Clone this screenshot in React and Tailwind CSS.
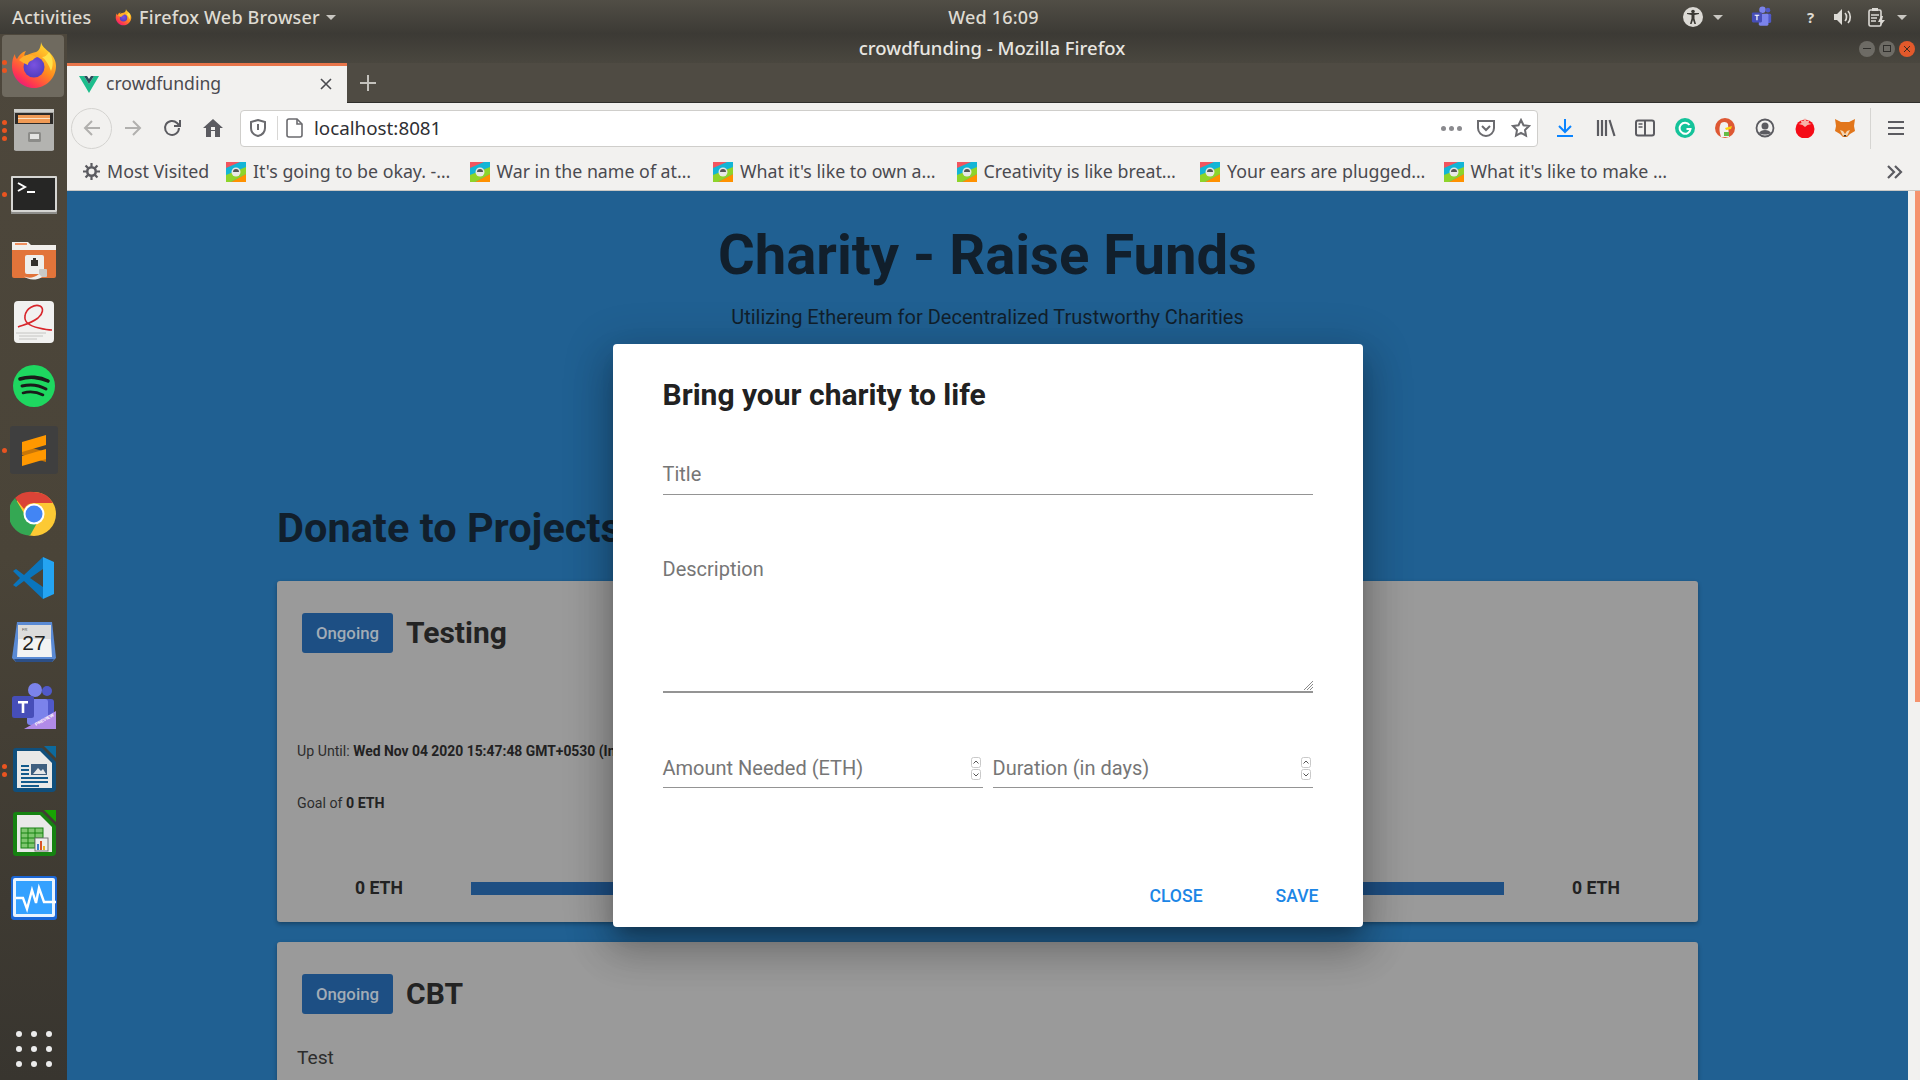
// App.jsx - Firefox on Ubuntu showing the crowdfunding page with the new charity dialog

const chromeFont = "font-['Noto_Sans','Open_Sans',sans-serif]";

// Dock and top bar icons
function FirefoxIcon({ size = 48 }) {
  return (
    <svg width={size} height={size} viewBox="0 0 48 48">
      <defs>
        <linearGradient id="ffBody" x1="0.8" y1="0.1" x2="0.2" y2="1">
          <stop offset="0" stopColor="#ffd52e" />
          <stop offset="0.45" stopColor="#ff8a1e" />
          <stop offset="0.8" stopColor="#ff3750" />
          <stop offset="1" stopColor="#e31587" />
        </linearGradient>
        <radialGradient id="ffGlobe" cx="0.5" cy="0.4" r="0.7">
          <stop offset="0" stopColor="#7a52e0" />
          <stop offset="1" stopColor="#4b3ab8" />
        </radialGradient>
      </defs>
      <path d="M31 0c1 5 5 7 8 10 5 5 7 9 7 14 0 12-10 22-22 22S2 36 2 24c0-5 1-9 3-12 0 3 1 4 2 5 2-4 5-7 9-8-2 3-2 5-1 6 3-3 7-4 11-5 3-1 5-5 5-10z" fill="url(#ffBody)" />
      <circle cx="24" cy="25" r="10.5" fill="url(#ffGlobe)" />
      <path d="M9 18c4-5 9-6 13-5 3 1 5 2 7 2-4 0-5 2-6 3-4 1-5 3-5 5-3-1-6-3-9-5z" fill="#ffb02a" />
      <path d="M39 10c4 6 5 12 2 19-2-6-5-11-9-14 3 0 5-2 7-5z" fill="#ffe14a" />
    </svg>
  );
}

function FilesIcon() {
  return (
    <svg width="48" height="48" viewBox="0 0 48 48">
      <rect x="4" y="3" width="40" height="42" rx="2" fill="#a9a9a6" />
      <rect x="4" y="3" width="40" height="3" fill="#cfcfcc" />
      <rect x="5" y="7" width="38" height="11" fill="#2d2a28" />
      <rect x="8" y="9" width="32" height="8" fill="#f09a55" />
      <rect x="8" y="12" width="32" height="1" fill="#fbe0c2" />
      <rect x="4" y="18" width="40" height="26" fill="#b3b3b0" />
      <rect x="18" y="26" width="13" height="10" rx="1.5" fill="#8c8c89" />
      <rect x="20" y="28" width="9" height="5" fill="#e4e4e2" />
    </svg>
  );
}

function TerminalIcon() {
  return (
    <svg width="48" height="48" viewBox="0 0 48 48">
      <rect x="1" y="6" width="46" height="36" rx="1" fill="#d6d6d3" />
      <rect x="3" y="8" width="42" height="32" fill="#262625" />
      <path d="M8 13l7 4-7 4" fill="none" stroke="#fff" strokeWidth="2" />
      <rect x="17" y="21" width="8" height="2" fill="#fff" />
      <rect x="1" y="42" width="46" height="2" fill="#8f8f8c" />
    </svg>
  );
}

function NetFolderIcon() {
  return (
    <svg width="48" height="48" viewBox="0 0 48 48">
      <path d="M2 8h16l3 3h25v8H2z" fill="#f2efec" />
      <rect x="5" y="9" width="12" height="2" fill="#ef8e5d" />
      <path d="M2 16h44v26a2 2 0 0 1-2 2H4a2 2 0 0 1-2-2z" fill="#e2743a" />
      <rect x="15" y="21" width="19" height="19" rx="2" fill="#eeeeec" />
      <path d="M21 32v-6h2v-2h3v2h2v6z" fill="#33302c" />
      <rect x="29" y="35" width="8" height="8" rx="1" fill="#c9c9c6" />
      <path d="M29 40c-6 5-12 4-15 2 3 4 12 5 18 1z" fill="#eeeeec" />
    </svg>
  );
}

function EvinceIcon() {
  return (
    <svg width="48" height="48" viewBox="0 0 48 48">
      <rect x="4" y="3" width="40" height="42" rx="4" fill="#f1f1f0" />
      <path d="M8 29c5-2 12-3 20-9 5-4 6-10 2-12-5-2-14 2-15 10-1 6 5 10 14 12 4 1 9 2 13 2" fill="none" stroke="#d8262c" strokeWidth="1.6" />
      <path d="M6 35h30M9 38h24M9 41h18" stroke="#c4c4c2" strokeWidth="1" />
    </svg>
  );
}

function SpotifyIcon() {
  return (
    <svg width="48" height="48" viewBox="0 0 48 48">
      <circle cx="24" cy="24" r="21" fill="#1ed760" />
      <path d="M10 17c9-3 20-2 28 2" fill="none" stroke="#1a1a1a" strokeWidth="3.6" strokeLinecap="round" />
      <path d="M12 24c8-2 17-1 24 3" fill="none" stroke="#1a1a1a" strokeWidth="3" strokeLinecap="round" />
      <path d="M13 31c7-2 14-1 20 2" fill="none" stroke="#1a1a1a" strokeWidth="2.6" strokeLinecap="round" />
    </svg>
  );
}

function SublimeIcon() {
  return (
    <svg width="48" height="48" viewBox="0 0 48 48">
      <rect x="0" y="0" width="48" height="48" rx="3" fill="#3f3f3f" />
      <path d="M12 19l24 7v10L12 29z" fill="#c87607" />
      <path d="M12 16l24-7v10L12 26z" fill="#ff9800" />
      <path d="M12 30l24-7v10L12 40z" fill="#ff9800" />
    </svg>
  );
}

function ChromeIcon() {
  return (
    <svg width="48" height="48" viewBox="0 0 48 48">
      <circle cx="24" cy="24" r="22" fill="#fcc934" />
      <path d="M24 2a22 22 0 0 1 19 11H24a11 11 0 0 0-10 6L5 8a22 22 0 0 1 19-6z" fill="#db4437" />
      <path d="M5 8l10 17a10 10 0 0 0 12 8l-7 12.600A22 22 0 0 1 5 8z" fill="#34a853" />
      <circle cx="24" cy="24" r="10.500" fill="#fff" />
      <circle cx="24" cy="24" r="8.500" fill="#4285f4" />
    </svg>
  );
}

function VSCodeIcon() {
  return (
    <svg width="48" height="48" viewBox="0 0 48 48">
      <path d="M33 3l11 5v32l-11 5z" fill="#24a4f2" />
      <path d="M33 3L14 21 6 15l-3 2 7 7-7 7 3 2 8-6 19 18V33L20 24 33 15z" fill="#0a75bd" />
    </svg>
  );
}

function CalendarIcon() {
  return (
    <svg width="48" height="48" viewBox="0 0 48 48">
      <path d="M7 4h35l4 36-4 4H6l-4-4z" fill="#5a8ad4" />
      <path d="M9 7h31l2 32H7z" fill="#f3f3f3" />
      <rect x="8" y="7" width="33" height="14" fill="#dcdcdc" />
      <text x="12" y="13" fontSize="4" fontFamily="Liberation Sans, sans-serif" fill="#555">FR</text>
      <text x="24" y="32" textAnchor="middle" fontSize="21" fontFamily="Liberation Sans, sans-serif" fill="#222">27</text>
      <path d="M6 44h36l2-3H4z" fill="#2d4f86" />
    </svg>
  );
}

function TeamsIcon({ size = 48, preview = true }) {
  return (
    <svg width={size} height={size} viewBox="0 0 48 48">
      <circle cx="25" cy="8" r="7" fill="#7b83eb" />
      <circle cx="37" cy="9" r="5" fill="#5059c9" />
      <rect x="31" y="17" width="13" height="20" rx="3" fill="#5059c9" />
      <rect x="17" y="17" width="21" height="26" rx="3" fill="#7b83eb" />
      <rect x="2" y="14" width="22" height="22" rx="2.500" fill="#464eb8" />
      <path d="M8 19h10v2.500h-3.700V31h-2.600v-9.500H8z" fill="#fff" />
      {preview && <path d="M14 47l32-18v18z" fill="#b18be8" />}
      {preview && <text x="26" y="44" fontSize="4.500" fontWeight="700" fontFamily="Liberation Sans, sans-serif" fill="#fff" transform="rotate(-29 26 44)">PREVIEW</text>}
    </svg>
  );
}

function WriterIcon() {
  return (
    <svg width="48" height="48" viewBox="0 0 48 48">
      <path d="M6 2h26l14 14v26a4 4 0 0 1-4 4H6a3 3 0 0 1-3-3V5a3 3 0 0 1 3-3z" fill="#104f7c" />
      <path d="M34 0h12v12z" fill="#0c6a9e" />
      <path d="M7 5h23l12 12v25H7z" fill="#e9e9e8" />
      <path d="M11 19h8v2h-8zM11 23h8v2h-8zM11 27h8v2h-8zM11 31h27v2H11zM11 35h27v2H11zM11 39h18v2H11z" fill="#145b8c" />
      <rect x="21" y="18" width="16" height="11" fill="#3f5f7f" />
      <path d="M23 28l5-6 3 3 2-2 3 5z" fill="#e8e8e8" />
    </svg>
  );
}

function CalcIcon() {
  return (
    <svg width="48" height="48" viewBox="0 0 48 48">
      <path d="M6 2h26l14 14v26a4 4 0 0 1-4 4H6a3 3 0 0 1-3-3V5a3 3 0 0 1 3-3z" fill="#168211" />
      <path d="M34 0h12v12z" fill="#18a303" />
      <path d="M7 5h23l12 12v25H7z" fill="#e9e9e8" />
      <rect x="11" y="18" width="22" height="20" fill="#7fc66f" stroke="#168211" />
      <path d="M11 23h22M11 28h22M11 33h22M18 18v20M25 18v20" stroke="#168211" strokeWidth="1" />
      <rect x="25" y="28" width="13" height="13" fill="#eee" stroke="#777" />
      <path d="M27 34h2v6h-2z" fill="#3f80c8" />
      <path d="M30 31h2v9h-2z" fill="#d9532b" />
      <path d="M33 36h2v4h-2z" fill="#e9b42b" />
    </svg>
  );
}

function MonitorIcon() {
  return (
    <svg width="48" height="48" viewBox="0 0 48 48">
      <rect x="1" y="2" width="46" height="44" rx="3" fill="#1b66d6" />
      <rect x="3" y="4" width="42" height="39" rx="2" fill="#eaf4ff" />
      <rect x="6" y="7" width="36" height="33" fill="#34a1ff" />
      <path d="M6 24h7l4 11 5-19 4 13 3-15 5 14h12" fill="none" stroke="#fff" strokeWidth="2.400" />
    </svg>
  );
}

function AppGrid() {
  return (
    <div className="grid grid-cols-3 gap-[9px]">
      {Array.from({ length: 9 }).map((_, i) => (
        <span key={i} className="w-[6px] h-[6px] rounded-full bg-[#ececec]" />
      ))}
    </div>
  );
}

const dockApps = [
  { icon: <FirefoxIcon />, dots: 2, active: true },
  { icon: <FilesIcon />, dots: 3 },
  { icon: <TerminalIcon />, dots: 1 },
  { icon: <NetFolderIcon />, dots: 0 },
  { icon: <EvinceIcon />, dots: 0 },
  { icon: <SpotifyIcon />, dots: 0 },
  { icon: <SublimeIcon />, dots: 1 },
  { icon: <ChromeIcon />, dots: 0 },
  { icon: <VSCodeIcon />, dots: 0 },
  { icon: <CalendarIcon />, dots: 0 },
  { icon: <TeamsIcon />, dots: 0 },
  { icon: <WriterIcon />, dots: 2 },
  { icon: <CalcIcon />, dots: 0 },
  { icon: <MonitorIcon />, dots: 0 },
];

function Dock() {
  return (
    <div className="w-[67px] shrink-0 flex flex-col bg-gradient-to-b from-[#4d473c] via-[#4a4438] to-[#38352f]">
      {dockApps.map((app, i) => (
        <div key={i} className="relative h-[64px] flex items-center justify-center">
          {app.active && <div className="absolute left-[2px] right-[3px] top-[1px] bottom-[1px] rounded-[4px] bg-[#6f6a5f]" />}
          <div className="relative">{app.icon}</div>
          {app.dots > 0 && (
            <div className="absolute left-[2px] top-0 bottom-0 flex flex-col justify-center gap-[3px]">
              {Array.from({ length: app.dots }).map((_, d) => (
                <span key={d} className="w-[5px] h-[5px] rounded-full bg-[#e95420]" />
              ))}
            </div>
          )}
        </div>
      ))}
      <div className="mt-auto h-[64px] pt-[2px] flex items-center justify-center">
        <AppGrid />
      </div>
    </div>
  );
}

function Caret() {
  return <span className="block w-0 h-0 border-x-[5px] border-x-transparent border-t-[5px] border-t-[#c9c7c2]" />;
}

// Ubuntu top panel
function TopBar() {
  return (
    <div className={`h-[34px] shrink-0 flex items-center text-[#dfdbd2] text-[18px] tracking-[0.2px] font-medium bg-gradient-to-b from-[#514e46] to-[#3c3a35] ${chromeFont}`}>
      <span className="ml-[12px] w-[103px]">Activities</span>
      <FirefoxIcon size={17} />
      <span className="ml-[7px]">Firefox Web Browser</span>
      <span className="ml-[6px]"><Caret /></span>
      <div className="flex-1 flex justify-center pr-[28px]">
        <span>Wed 16:09</span>
      </div>
      <div className="flex items-center w-[241px]">
        <svg width="20" height="20" viewBox="0 0 20 20" className="ml-[4px]">
          <circle cx="10" cy="10" r="10" fill="#dcdad5" />
          <circle cx="10" cy="4.500" r="1.800" fill="#3c3a35" />
          <path d="M4 7l4.500 1v3.500L7 17h1.600l1.400-4 1.400 4H13l-1.500-5.500V8L16 7V6H4z" fill="#3c3a35" />
        </svg>
        <span className="ml-[10px]"><Caret /></span>
        <span className="ml-[28px]"><TeamsIcon size={22} preview={false} /></span>
        <span className="ml-[34px] w-[14px] text-[15px] font-bold">?</span>
        <svg width="20" height="18" viewBox="0 0 20 18" className="ml-[12px]">
          <path d="M1 6h3l5-5v16l-5-5H1z" fill="#dcdad5" />
          <path d="M12 5c2 2 2 6 0 8M15 3c3 3 3 9 0 12" fill="none" stroke="#dcdad5" strokeWidth="1.700" />
        </svg>
        <svg width="18" height="20" viewBox="0 0 18 20" className="ml-[15px]">
          <rect x="1" y="3" width="12" height="16" rx="1.500" fill="none" stroke="#dcdad5" strokeWidth="1.600" />
          <rect x="4" y="1" width="6" height="3" fill="#dcdad5" />
          <path d="M3 8h8M3 11h6M3 14h5" stroke="#dcdad5" strokeWidth="1.500" />
          <path d="M13 9l-3 6h3l-1 4 5-6h-3l1-4z" fill="#dcdad5" />
        </svg>
        <span className="ml-[11px]"><Caret /></span>
      </div>
    </div>
  );
}

function WindowButtons() {
  return (
    <div className="flex items-center gap-[4px] pr-[5px]">
      <span className="w-[16px] h-[16px] rounded-full bg-[#6d6b65] flex items-center justify-center">
        <span className="w-[8px] h-[1px] bg-[#2f2e2b]" />
      </span>
      <span className="w-[16px] h-[16px] rounded-full bg-[#6d6b65] flex items-center justify-center">
        <span className="w-[8px] h-[7px] border border-[#2f2e2b]" />
      </span>
      <span className="w-[16px] h-[16px] rounded-full bg-[#e2592b] flex items-center justify-center">
        <svg width="8" height="8" viewBox="0 0 8 8"><path d="M1 1l6 6M7 1L1 7" stroke="#3c2a20" strokeWidth="1" /></svg>
      </span>
    </div>
  );
}

function TitleBar() {
  return (
    <div className={`h-[29px] shrink-0 flex items-center bg-gradient-to-b from-[#3c3a35] to-[#4a473f] ${chromeFont}`}>
      <div className="flex-1 pl-[58px] pb-[2px] text-center text-[18.5px] font-medium text-[#e8e6e1]">crowdfunding - Mozilla Firefox</div>
      <WindowButtons />
    </div>
  );
}

function TabStrip() {
  return (
    <div className={`h-[40px] shrink-0 flex bg-[#4f4b43] border-b border-[#2f2e2b] ${chromeFont}`}>
      <div className="w-[280px] h-[40px] flex items-center bg-[#f2f1ef] border-t-[3px] border-[#e8754a] pl-[12px] pr-[14px] pb-[2px]">
        <svg width="20" height="18" viewBox="0 0 20 18">
          <path d="M0 1h5l5 8 5-8h5L10 18z" fill="#1dbd8c" />
          <path d="M5 1h3l2 3 2-3h3l-5 8z" fill="#2d4a5a" />
        </svg>
        <span className="ml-[7px] flex-1 text-[17.6px] text-[#4a4a4f]">crowdfunding</span>
        <svg width="14" height="14" viewBox="0 0 14 14"><path d="M2 2l10 10M12 2L2 12" stroke="#4a4a4f" strokeWidth="1.600" /></svg>
      </div>
      <div className="w-[42px] flex items-center justify-center">
        <svg width="18" height="18" viewBox="0 0 18 18"><path d="M9 1v16M1 9h16" stroke="#c4c2bd" strokeWidth="2" /></svg>
      </div>
    </div>
  );
}

// Toolbar icons, all 20x20 in #5b5b60
function ToolIcon({ children, w = 20, className = "" }) {
  return (
    <svg width={w} height="20" viewBox={`0 0 ${w} 20`} className={className} fill="none" stroke="#5b5b60" strokeWidth="2">
      {children}
    </svg>
  );
}

function Toolbar() {
  return (
    <div className={`h-[50px] shrink-0 flex items-center bg-[#f2f1ef] ${chromeFont}`}>
      <div className="ml-[4px] w-[41px] h-[41px] rounded-full border border-[#d4d3d0] flex items-center justify-center">
        <ToolIcon><path d="M18 10H3M10 3l-7 7 7 7" stroke="#b1b0ae" /></ToolIcon>
      </div>
      <ToolIcon className="ml-[11px]"><path d="M2 10h15M10 3l7 7-7 7" stroke="#b1b0ae" /></ToolIcon>
      <ToolIcon className="ml-[20px]"><path d="M16 10a7 7 0 1 1-2-5l3 3M17 2v6h-6" /></ToolIcon>
      <svg width="20" height="20" viewBox="0 0 20 20" className="ml-[20px]">
        <path d="M10 1L0 10h3v9h5v-6h4v6h5v-9h3z" fill="#5b5b60" />
        <rect x="8" y="9" width="4" height="3" fill="#f2f1ef" />
      </svg>
      <div className="ml-[17px] w-[1298px] h-[37px] flex items-center bg-white border border-[#cfcecb] rounded-[4px]">
        <svg width="16" height="18" viewBox="0 0 16 18" className="ml-[9px]">
          <path d="M8 1l7 2v6c0 4-3 7-7 8-4-1-7-4-7-8V3z" fill="none" stroke="#6b6b6f" strokeWidth="2" />
          <rect x="7" y="5" width="2" height="6" fill="#6b6b6f" />
        </svg>
        <span className="ml-[11px] w-px h-[24px] bg-[#d8d7d5]" />
        <svg width="18" height="20" viewBox="0 0 18 20" className="ml-[8px]">
          <path d="M3 1h8l5 5v11a2 2 0 0 1-2 2H3a2 2 0 0 1-2-2V3a2 2 0 0 1 2-2z" fill="none" stroke="#6b6b6f" strokeWidth="1.600" />
          <path d="M11 1v5h5" fill="none" stroke="#6b6b6f" strokeWidth="1.600" />
        </svg>
        <span className="ml-[10px] flex-1 text-[18.8px] text-[#2f2f33]">localhost:8081</span>
        <span className="flex gap-[3px]">
          <span className="w-[5px] h-[5px] rounded-full bg-[#8a8a8e]" />
          <span className="w-[5px] h-[5px] rounded-full bg-[#8a8a8e]" />
          <span className="w-[5px] h-[5px] rounded-full bg-[#8a8a8e]" />
        </span>
        <ToolIcon className="ml-[14px]"><path d="M2 3h16v7a8 8 0 0 1-16 0z" stroke="#6b6b6f" /><path d="M6 8l4 4 4-4" stroke="#6b6b6f" /></ToolIcon>
        <ToolIcon className="ml-[15px] mr-[6px]"><path d="M10 2l2.500 5.300 5.500.700-4 4 1 5.700-5-2.800-5 2.800 1-5.700-4-4 5.500-.700z" stroke="#6b6b6f" /></ToolIcon>
      </div>
      <ToolIcon className="ml-[17px]"><path d="M10 1v12M4 8l6 6 6-6M2 18h16" stroke="#0a84ff" /></ToolIcon>
      <svg width="20" height="20" viewBox="0 0 20 20" className="ml-[21px]">
        <path d="M2 2v16M6 2v16M10 2v16M13.500 2l5 16" stroke="#5b5b60" strokeWidth="2.200" fill="none" />
      </svg>
      <svg width="20" height="20" viewBox="0 0 20 20" className="ml-[19px]">
        <rect x="1" y="2.500" width="18" height="15" rx="2" fill="none" stroke="#5b5b60" strokeWidth="2" />
        <path d="M10 2.500v15" stroke="#5b5b60" strokeWidth="2" />
        <path d="M3.500 6h4M3.500 9h4" stroke="#5b5b60" strokeWidth="1.400" />
      </svg>
      <svg width="20" height="20" viewBox="0 0 20 20" className="ml-[20px]">
        <circle cx="10" cy="10" r="10" fill="#15c39a" />
        <path d="M14.500 7a5.500 5.500 0 1 0 1 4h-4" fill="none" stroke="#fff" strokeWidth="2" />
      </svg>
      <svg width="20" height="20" viewBox="0 0 20 20" className="ml-[20px]">
        <circle cx="10" cy="10" r="10" fill="#de5833" />
        <path d="M6 19c-2-6-2-10 0-14 3-2 6-1 7 1l1 13z" fill="#f2f1ef" />
        <path d="M10 10l7-2-1 3-5 1z" fill="#fdd20a" />
        <path d="M9 14h5v4H9z" fill="#65bc46" />
      </svg>
      <svg width="20" height="20" viewBox="0 0 20 20" className="ml-[20px]">
        <circle cx="10" cy="10" r="8.500" fill="none" stroke="#5b5b60" strokeWidth="1.800" />
        <circle cx="10" cy="8" r="3.500" fill="#5b5b60" />
        <path d="M4 15c2-4 10-4 12 0-3 2-9 2-12 0z" fill="#5b5b60" />
      </svg>
      <svg width="20" height="20" viewBox="0 0 20 20" className="ml-[20px]">
        <circle cx="10" cy="11" r="9.500" fill="#f50c17" />
        <path d="M10 0l1.500 3 3-1-1 3 3 1-4 1-2.500 2-2.500-2-4-1 3-1-1-3 3 1z" fill="#f7b2a8" />
      </svg>
      <svg width="20" height="20" viewBox="0 0 20 20" className="ml-[20px]">
        <path d="M0 1l6 3h8l6-3-1 7 1 5-5 3-3 3H8l-3-3-5-3 1-5z" fill="#e2761b" />
        <path d="M5 12l3 1 2 3 2-3 3-1-3 6H8z" fill="#f4d7b5" />
        <path d="M8.500 17h3l-1.500 2z" fill="#33261c" />
      </svg>
      <span className="ml-[15px] w-px h-[41px] bg-[#d6d5d2]" />
      <svg width="16" height="16" viewBox="0 0 16 16" className="ml-[17px]">
        <path d="M0 2h16M0 8h16M0 14h16" stroke="#5b5b60" strokeWidth="2" />
      </svg>
    </div>
  );
}

function Favicon() {
  return (
    <svg width="20" height="20" viewBox="0 0 20 20" className="shrink-0">
      <rect width="20" height="20" fill="#13b5d6" />
      <path d="M0 0h14L0 6z" fill="#f2555f" />
      <path d="M0 13L20 5v7L5 20H0z" fill="#8ed42a" />
      <path d="M5 20l15-8v8z" fill="#ff9100" />
      <circle cx="10" cy="10" r="4.500" fill="#e8e8e6" />
      <path d="M7 10a3 3 0 0 1 6 0z" fill="#555" />
    </svg>
  );
}

const bookmarks = [
  "It's going to be okay. -…",
  "War in the name of at…",
  "What it's like to own a…",
  "Creativity is like breat…",
  "Your ears are plugged…",
  "What it's like to make …",
];

function BookmarksBar() {
  return (
    <div className={`h-[38px] shrink-0 flex items-center bg-[#f2f1ef] border-b border-[#c9c8c5] text-[17.8px] text-[#4a4a4f] ${chromeFont}`}>
      <svg width="17" height="17" viewBox="0 0 20 20" className="ml-[16px]">
        <circle cx="10" cy="10" r="5" fill="none" stroke="#5b5b60" strokeWidth="3" />
        <path d="M10 0v4M10 16v4M0 10h4M16 10h4M3 3l3 3M14 14l3 3M17 3l-3 3M6 14l-3 3" stroke="#5b5b60" strokeWidth="2.600" />
      </svg>
      <span className="ml-[7px] w-[119px] whitespace-nowrap">Most Visited</span>
      {bookmarks.map((b) => (
        <div key={b} className="w-[243.5px] flex items-center shrink-0">
          <Favicon />
          <span className="ml-[7px] whitespace-nowrap">{b}</span>
        </div>
      ))}
      <svg width="18" height="16" viewBox="0 0 18 16" className="ml-auto mr-[16px]">
        <path d="M2 2l6 6-6 6M9 2l6 6-6 6" fill="none" stroke="#5b5b60" strokeWidth="2.200" />
      </svg>
    </div>
  );
}

// Page content, colours already darkened by the dialog's backdrop
function CharityCard({ title, children }) {
  return (
    <div className="h-[341px] bg-[#9a9a9a] rounded-[3px] shadow-[0_2px_4px_rgba(0,0,0,0.3)] mb-[20px] overflow-hidden">
      <div className="flex items-center pt-[31px] pl-[25px]">
        <span className="w-[91px] h-[40px] pt-[2px] flex items-center justify-center rounded-[3px] bg-[#1d4f84] text-[16.8px] font-medium text-[#a2acb6]">Ongoing</span>
        <span className="ml-[13px] pt-[1px] leading-[40px] text-[30px] font-bold text-[#232323]">{title}</span>
      </div>
      {children}
    </div>
  );
}

function Page() {
  return (
    <div className="flex-1 relative overflow-hidden bg-[#206092] font-['Roboto',sans-serif]">
      <div className="px-[210px] pt-[26px]">
        <h1 className="h-[76px] leading-[76px] text-center text-[56.2px] font-bold text-[#111f2c]">Charity - Raise Funds</h1>
        <p className="mt-[10px] leading-[28px] text-center text-[20px] text-[#111f2c]">Utilizing Ethereum for Decentralized Trustworthy Charities</p>
        <h2 className="mt-[172px] leading-[50px] text-[41.5px] font-bold text-[#111f2c]">Donate to Projects</h2>
        <div className="mt-[28px]">
          <CharityCard title="Testing">
            <p className="mt-[88px] ml-[20px] leading-[20px] text-[14.2px] text-[#2d2d2d]">
              Up Until: <b className="font-bold text-[13.9px] text-[#222]">Wed Nov 04 2020 15:47:48 GMT+0530 (India Standard Time)</b>
            </p>
            <p className="mt-[32px] ml-[20px] leading-[20px] text-[14.2px] text-[#2d2d2d]">
              Goal of <b className="font-bold text-[#222]">0 ETH</b>
            </p>
            <div className="mt-[63px] flex items-center h-[24px]">
              <span className="w-[194px] pl-[78px] text-[17.6px] font-bold text-[#222]">0 ETH</span>
              <span className="flex-1 h-[13px] bg-[#1e4f83]" />
              <span className="w-[194px] pl-[68px] text-[17.6px] font-bold text-[#222]">0 ETH</span>
            </div>
          </CharityCard>
          <CharityCard title="CBT">
            <p className="mt-[30px] ml-[20px] leading-[28px] text-[19.2px] text-[#2d2d2d]">Test</p>
          </CharityCard>
        </div>
      </div>
      <div className="absolute inset-0 flex items-center justify-center">
        <NewCharityDialog />
      </div>
    </div>
  );
}

function Spinner() {
  return (
    <div className="flex flex-col gap-[1px] mr-[2px]">
      <svg width="10" height="11" viewBox="0 0 10 11">
        <rect x="0.500" y="0.500" width="9" height="10" rx="2" fill="#fff" stroke="#c9c9c9" />
        <path d="M2.500 6.500L5 4l2.500 2.500" fill="none" stroke="#555" />
      </svg>
      <svg width="10" height="11" viewBox="0 0 10 11">
        <rect x="0.500" y="0.500" width="9" height="10" rx="2" fill="#fff" stroke="#c9c9c9" />
        <path d="M2.500 4.500L5 7l2.500-2.500" fill="none" stroke="#555" />
      </svg>
    </div>
  );
}

function NumberField({ label }) {
  return (
    <div className="flex items-center justify-between h-[34px] pb-[5px] border-b border-[#949494] text-[20px] leading-[28px] text-[#767676]">
      <span>{label}</span>
      <Spinner />
    </div>
  );
}

function NewCharityDialog() {
  return (
    <div className="w-[750px] h-[583px] bg-white rounded-[4px] flex flex-col pt-[31px] shadow-[0_11px_15px_-7px_rgba(0,0,0,0.25),0_24px_38px_3px_rgba(0,0,0,0.18),0_9px_46px_8px_rgba(0,0,0,0.16)]">
      <div className="px-[50px]">
        <h3 className="leading-[40px] text-[30px] font-bold text-[#212121]">Bring your charity to life</h3>
        <div className="mt-[45px] h-[35px] border-b border-[#949494] text-[20px] leading-[28px] text-[#767676]">Title</div>
        <div className="relative mt-[60px] h-[138px] border-b-2 border-[#949494] text-[20px] leading-[28px] text-[#767676]">
          Description
          <svg width="10" height="10" viewBox="0 0 10 10" className="absolute right-0 bottom-[1px]">
            <path d="M10 1L1 10M10 4l-6 6M10 7l-3 3" stroke="#8a8a8a" strokeWidth="1" />
          </svg>
        </div>
        <div className="mt-[61px] grid grid-cols-2 gap-[10px]">
          <NumberField label="Amount Needed (ETH)" />
          <NumberField label="Duration (in days)" />
        </div>
      </div>
      <div className="mt-auto flex justify-end gap-[73px] pr-[44px] pb-[21px] leading-[20px] text-[17.6px] font-medium text-[#1c86e6]">
        <span>CLOSE</span>
        <span>SAVE</span>
      </div>
    </div>
  );
}

function Scrollbar() {
  return (
    <div className="w-[12px] shrink-0 bg-[#f2f1ef] flex justify-end">
      <div className="w-[5px] h-[511px] bg-[#f5936e]" />
    </div>
  );
}

export default function App() {
  return (
    <div className="w-[1920px] h-[1080px] overflow-hidden flex flex-col">
      <TopBar />
      <div className="flex-1 flex min-h-0 bg-[#4a4438]">
        <Dock />
        <div className="flex-1 flex flex-col min-w-0">
          <TitleBar />
          <TabStrip />
          <Toolbar />
          <BookmarksBar />
          <div className="flex-1 flex min-h-0">
            <Page />
            <Scrollbar />
          </div>
        </div>
      </div>
    </div>
  );
}
